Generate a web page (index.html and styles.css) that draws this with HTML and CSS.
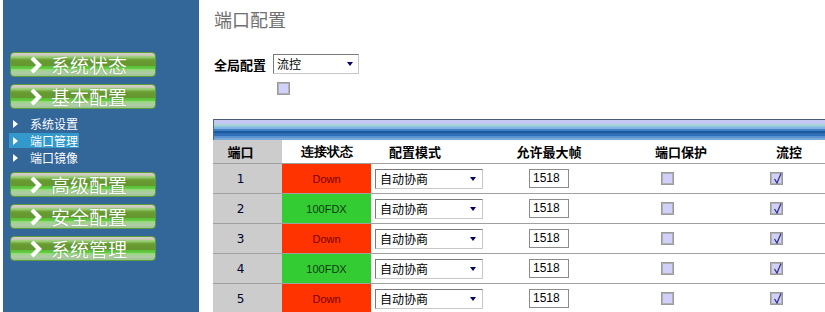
FILE: index.html
```html
<!DOCTYPE html>
<html lang="zh">
<head>
<meta charset="utf-8">
<link rel="stylesheet" href="styles.css">
</head>
<body>
<div class="page">
  <nav class="sidebar">
    <a class="navbtn"><svg class="chev" width="14" height="18" viewBox="0 0 14 18"><polyline points="3,2 10,9 3,16"/></svg><span>系统状态</span></a>
    <a class="navbtn"><svg class="chev" width="14" height="18" viewBox="0 0 14 18"><polyline points="3,2 10,9 3,16"/></svg><span>基本配置</span></a>
    <ul class="sub">
      <li><i class="tri"></i>系统设置</li>
      <li class="active"><i class="tri"></i>端口管理</li>
      <li><i class="tri"></i>端口镜像</li>
    </ul>
    <a class="navbtn"><svg class="chev" width="14" height="18" viewBox="0 0 14 18"><polyline points="3,2 10,9 3,16"/></svg><span>高级配置</span></a>
    <a class="navbtn"><svg class="chev" width="14" height="18" viewBox="0 0 14 18"><polyline points="3,2 10,9 3,16"/></svg><span>安全配置</span></a>
    <a class="navbtn"><svg class="chev" width="14" height="18" viewBox="0 0 14 18"><polyline points="3,2 10,9 3,16"/></svg><span>系统管理</span></a>
  </nav>
  <main class="main">
    <h1 class="title">端口配置</h1>
    <div class="global">
      <span class="label">全局配置</span>
      <div class="select sel-global"><span>流控</span><i class="arrow"></i></div>
    </div>
    <div class="cb global-cb"></div>
    <div class="table">
      <div class="bar"></div>
      <div class="row head">
        <div class="c c-port">端口</div>
        <div class="c c-status">连接状态</div>
        <div class="c c-mode">配置模式</div>
        <div class="c c-frame">允许最大帧</div>
        <div class="c c-prot">端口保护</div>
        <div class="c c-flow">流控</div>
        <div class="c"></div>
      </div>
      <div class="row">
        <div class="c c-port num">1</div>
        <div class="c c-status down">Down</div>
        <div class="c c-mode"><div class="select sel-mode"><span>自动协商</span><i class="arrow"></i></div></div>
        <div class="c c-frame"><div class="input">1518</div></div>
        <div class="c c-prot"><div class="cb"></div></div>
        <div class="c c-flow"><div class="cb checked"><svg width="11" height="11" viewBox="0 0 11 11"><path d="M2.5 6 L5 10 L9 0.5"/></svg></div></div>
        <div class="c"></div>
      </div>
      <div class="row">
        <div class="c c-port num">2</div>
        <div class="c c-status up">100FDX</div>
        <div class="c c-mode"><div class="select sel-mode"><span>自动协商</span><i class="arrow"></i></div></div>
        <div class="c c-frame"><div class="input">1518</div></div>
        <div class="c c-prot"><div class="cb"></div></div>
        <div class="c c-flow"><div class="cb checked"><svg width="11" height="11" viewBox="0 0 11 11"><path d="M2.5 6 L5 10 L9 0.5"/></svg></div></div>
        <div class="c"></div>
      </div>
      <div class="row">
        <div class="c c-port num">3</div>
        <div class="c c-status down">Down</div>
        <div class="c c-mode"><div class="select sel-mode"><span>自动协商</span><i class="arrow"></i></div></div>
        <div class="c c-frame"><div class="input">1518</div></div>
        <div class="c c-prot"><div class="cb"></div></div>
        <div class="c c-flow"><div class="cb checked"><svg width="11" height="11" viewBox="0 0 11 11"><path d="M2.5 6 L5 10 L9 0.5"/></svg></div></div>
        <div class="c"></div>
      </div>
      <div class="row">
        <div class="c c-port num">4</div>
        <div class="c c-status up">100FDX</div>
        <div class="c c-mode"><div class="select sel-mode"><span>自动协商</span><i class="arrow"></i></div></div>
        <div class="c c-frame"><div class="input">1518</div></div>
        <div class="c c-prot"><div class="cb"></div></div>
        <div class="c c-flow"><div class="cb checked"><svg width="11" height="11" viewBox="0 0 11 11"><path d="M2.5 6 L5 10 L9 0.5"/></svg></div></div>
        <div class="c"></div>
      </div>
      <div class="row">
        <div class="c c-port num">5</div>
        <div class="c c-status down">Down</div>
        <div class="c c-mode"><div class="select sel-mode"><span>自动协商</span><i class="arrow"></i></div></div>
        <div class="c c-frame"><div class="input">1518</div></div>
        <div class="c c-prot"><div class="cb"></div></div>
        <div class="c c-flow"><div class="cb checked"><svg width="11" height="11" viewBox="0 0 11 11"><path d="M2.5 6 L5 10 L9 0.5"/></svg></div></div>
        <div class="c"></div>
      </div>
    </div>
  </main>
</div>
</body>
</html>
```
FILE: styles.css
```css
* { box-sizing: border-box; margin: 0; padding: 0; }
html, body { width: 825px; height: 312px; overflow: hidden; background: #fff; }
body { font-family: "Noto Sans CJK SC", "Liberation Sans", sans-serif; color: #000; }

.page { display: flex; height: 312px; }

/* Sidebar */
.sidebar {
  width: 196px;
  margin-left: 3px;
  height: 312px;
  background: #336699;
  padding-top: 52px;
  display: flex;
  flex-direction: column;
  align-items: flex-start;
  gap: 7px;
}
.navbtn {
  margin-left: 7px;
  width: 146px;
  height: 25px;
  border: 1px solid #5c9c3c;
  border-radius: 4px;
  background: linear-gradient(to bottom,
    #d2d2c2 0, #c6c6b4 3px,
    #a6d486 3px, #8cc466 5px,
    #74a83c 6px, #669930 8px, #659830 13px,
    #56bf36 13px, #66cf46 16px,
    #92da78 16px, #b4ccac 20px, #96c68a 23px);
  display: flex;
  align-items: center;
  color: #fff;
  font-size: 19px;
  line-height: 23px;
  text-shadow: 0 0 1px #4a7a2a;
}
.chev { margin-left: 18px; flex: none; }
.chev polyline { fill: none; stroke: #fff; stroke-width: 4.2; stroke-linecap: butt; stroke-linejoin: miter; }
.navbtn span { margin-left: 8px; }

.sub {
  list-style: none;
  margin-left: 6px;
  display: flex;
  flex-direction: column;
  gap: 2px;
}
.sub li {
  width: 70px;
  height: 15px;
  display: flex;
  align-items: center;
  padding-left: 4px;
  font-size: 12px;
  line-height: 15px;
  color: #fff;
}
.sub li.active { background: #3399cc; }
.tri {
  width: 0; height: 0;
  border-left: 5px solid #fff;
  border-top: 4.5px solid transparent;
  border-bottom: 4.5px solid transparent;
  margin-right: 12px;
}

/* Main */
.main {
  margin-left: 14px;
  width: 612px;
  padding-top: 9px;
}
.title {
  font-size: 18px;
  line-height: 20px;
  font-weight: normal;
  color: #707070;
  padding-left: 1px;
}
.global {
  margin-top: 25px;
  display: flex;
  align-items: center;
  height: 20px;
}
.label {
  font-size: 13px;
  font-weight: bold;
  width: 52px;
  padding-left: 1px;
  margin-right: 8px;
  white-space: nowrap;
}
.select {
  display: flex;
  align-items: center;
  justify-content: space-between;
  height: 20px;
  background: #fff;
  border: 1px solid #7a7a7a;
  border-bottom-color: #c8c8c8;
  border-right-color: #c8c8c8;
  font-size: 12px;
  line-height: 18px;
}
.sel-global { width: 86px; padding: 0 5px 0 3px; }
.sel-mode { width: 108px; padding: 0 6px 0 4px; margin-left: 4px; }
.arrow {
  width: 0; height: 0;
  border-top: 4px solid #000066;
  border-left: 3.5px solid transparent;
  border-right: 3.5px solid transparent;
}

.cb {
  width: 13px;
  height: 13px;
  border: 1px solid #9a9a9a;
  background: #d0d0f8;
  box-shadow: inset 0 0 0 1px #b0b0b8;
  position: relative;
}
.cb svg { position: absolute; left: 1px; top: 0; }
.cb svg path { fill: none; stroke: #333388; stroke-width: 1.3; }
.global-cb { margin-top: 8px; margin-left: 64px; }

/* Table */
.table { margin-top: 24px; width: 612px; }
.bar {
  height: 21px;
  border-left: 1px solid #506a8c;
  background: linear-gradient(to bottom,
    #4a5a7a 0, #4a5a7a 1px,
    #c8c8f4 1px, #c4c8f2 5px,
    #b4d6e0 5px, #9cd0d0 7px,
    #88b8e8 8px, #80b0e4 10px,
    #4686c8 10px, #3a7ac0 12px,
    #1c5aa0 12px, #1c5aa0 14px,
    #2e6cb8 14px, #3270bc 17px,
    #5890d0 17px, #6096d0 19px,
    #78a8d8 19px, #78a8d8 21px);
}
.row {
  display: grid;
  grid-template-columns: 69px 89px 129px 104px 154px 62px 1fr;
  height: 30px;
  border-bottom: 1px solid #a0a0a0;
}
.row.head { height: 24px; }
.c {
  display: flex;
  align-items: center;
  height: 100%;
}
.head .c { font-size: 13px; font-weight: bold; justify-content: center; }
.head .c-mode { justify-content: flex-start; padding-left: 18px; }
.c-port { background: #cccccc; justify-content: center; padding-right: 14px; }
.head .c-port { padding-right: 14px; }
.num { font-family: "DejaVu Sans", sans-serif; font-size: 12px; color: #000033; }
.c-status { justify-content: center; font-family: "Liberation Sans", sans-serif; font-size: 11px; }
.down { background: #ff3300; color: #7a0000; }
.up { background: #33cc33; color: #0f3a0f; }
.c-frame { justify-content: center; padding-right: 6px; }
.input {
  width: 40px;
  height: 19px;
  border: 1px solid #8c8c8c;
  background: #fff;
  font-family: "Liberation Sans", sans-serif;
  font-size: 12px;
  line-height: 17px;
  padding-left: 3px;
  color: #000;
}
.row:not(.head) .c-prot { padding-left: 57px; }
.row:not(.head) .c-flow { padding-left: 12px; }
```
